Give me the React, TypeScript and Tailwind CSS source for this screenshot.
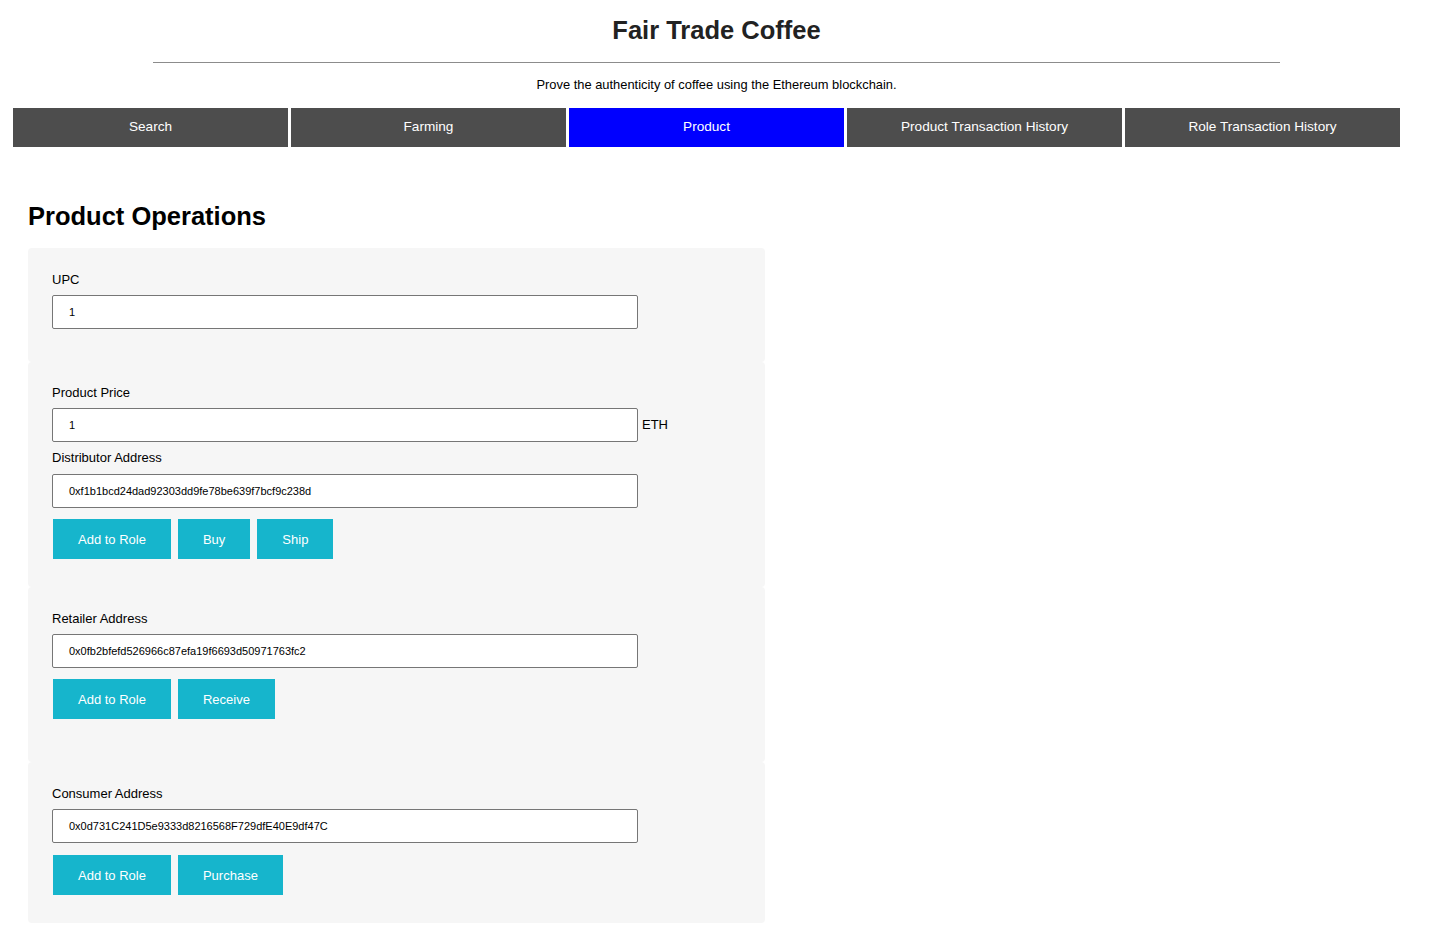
import React from "react";

const tabs = ["Search", "Farming", "Product", "Product Transaction History", "Role Transaction History"];

function Label({ children }: { children: React.ReactNode }) {
  return <div className="text-[13px] leading-[15px] text-black mb-[8px]">{children}</div>;
}

function Field({ value }: { value: string }) {
  return (
    <div className="w-[586px] h-[34px] bg-white border border-[#767676] rounded-[2px] flex items-center pl-[16px] text-[11px] text-black">
      {value}
    </div>
  );
}

function Btn({ children }: { children: React.ReactNode }) {
  return (
    <button className="h-[40px] px-[25px] bg-[#16b5cc] text-white text-[13px] leading-none">{children}</button>
  );
}

export default function App() {
  return (
    <div className="min-h-screen bg-white text-black" style={{ fontFamily: '"Liberation Sans", Arial, sans-serif' }}>
      <div className="pt-[16px] text-center">
        <h1 className="text-[25.5px] leading-[28px] font-bold text-[#222]">Fair Trade Coffee</h1>
        <div className="mx-auto mt-[18px] w-[1127px] h-px bg-[#8c8c8c]" />
        <p className="mt-[14px] text-[12.9px] leading-[15px]">Prove the authenticity of coffee using the Ethereum blockchain.</p>
      </div>
      <div className="ml-[13px] mt-[16px] w-[1387px] flex gap-[3px]">
        {tabs.map((t) => (
          <div
            key={t}
            className={`flex-1 h-[39px] flex items-center justify-center text-white text-[13.6px] ${t === "Product" ? "bg-[#0000ff]" : "bg-[#4d4d4d]"}`}
          >
            {t}
          </div>
        ))}
      </div>
      <div className="ml-[28px] mt-[55px]">
        <h2 className="text-[25.5px] leading-[28px] font-bold">Product Operations</h2>
        <div className="mt-[18px] w-[737px]">
          <div className="bg-[#f6f6f6] rounded-[4px] pl-[24px] pt-[24px] pb-[33px]">
            <Label>UPC</Label>
            <Field value="1" />
          </div>
          <div className="bg-[#f6f6f6] rounded-[4px] pl-[24px] pt-[23px] pb-[28px]">
            <Label>Product Price</Label>
            <div className="flex items-center">
              <Field value="1" />
              <span className="ml-[4px] text-[13px]">ETH</span>
            </div>
            <div className="mt-[8px]">
              <div className="text-[13px] leading-[15px] mb-[9px]">Distributor Address</div>
              <Field value="0xf1b1bcd24dad92303dd9fe78be639f7bcf9c238d" />
            </div>
            <div className="mt-[11px] ml-px flex gap-[7px]">
              <Btn>Add to Role</Btn>
              <Btn>Buy</Btn>
              <Btn>Ship</Btn>
            </div>
          </div>
          <div className="bg-[#f6f6f6] rounded-[4px] pl-[24px] pt-[24px] pb-[43px]">
            <Label>Retailer Address</Label>
            <Field value="0x0fb2bfefd526966c87efa19f6693d50971763fc2" />
            <div className="mt-[11px] ml-px flex gap-[7px]">
              <Btn>Add to Role</Btn>
              <Btn>Receive</Btn>
            </div>
          </div>
          <div className="bg-[#f6f6f6] rounded-[4px] pl-[24px] pt-[24px] pb-[28px]">
            <Label>Consumer Address</Label>
            <Field value="0x0d731C241D5e9333d8216568F729dfE40E9df47C" />
            <div className="mt-[12px] ml-px flex gap-[7px]">
              <Btn>Add to Role</Btn>
              <Btn>Purchase</Btn>
            </div>
          </div>
        </div>
      </div>
      <div className="h-[22px]" />
    </div>
  );
}
